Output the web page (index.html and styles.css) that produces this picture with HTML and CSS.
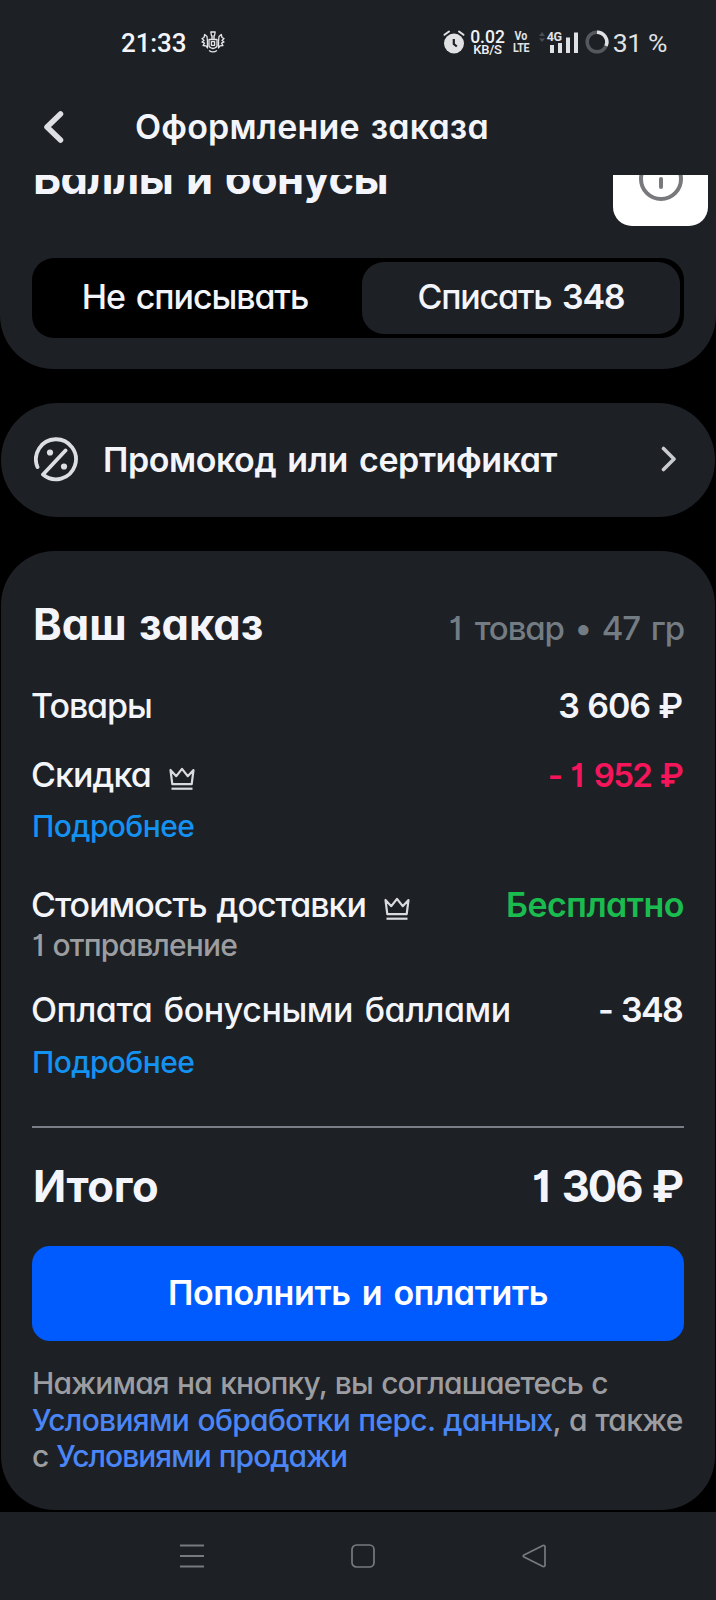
FILE: index.html
```html
<!DOCTYPE html>
<html lang="ru">
<head>
<meta charset="utf-8">
<title>Оформление заказа</title>
<link rel="stylesheet" href="styles.css">
</head>
<body>
<div class="status-bar">
  <div class="status-left">
    <span class="clock">21:33</span>
    <svg class="crest" width="24" height="22" viewBox="0 0 24 22" fill="none" stroke="#e3e5e7" stroke-width="1.3" stroke-linejoin="round"><path d="M9.800 1h4.400l-.8 4.200h-2.800zM10 6.800h4M8 8.500h8v6c0 1.500-2 2.500-4 3-2-.5-4-1.500-4-3zM10.400 10.600h3.200v3.700h-3.200zM6.400 9.500 6 5.500 3.700 3.500 3 6.500 1 7.500l2 2-2 1.500 2.500 1.200L2 14.500l3 .3L6.500 17zM17.600 9.500l.4-4 2.300-2 .7 3 2 1-2 2 2 1.500-2.500 1.200 1.500 2.300-3 .3-1.500 2.200zM8 19.500c2.500 1.800 5.500 1.800 8 0"/></svg>
  </div>
  <div class="status-right">
    <svg class="alarm" width="22" height="24" viewBox="0 0 22 24"><circle cx="11" cy="13.500" r="10" fill="#dfe1e3"/><path d="M1.500 4.800 6 1.500M20.500 4.800 16 1.500" stroke="#dfe1e3" stroke-width="2" stroke-linecap="round"/><path d="M10.800 9v5l3 2.500" fill="none" stroke="#1d2025" stroke-width="2.200"/></svg>
    <div class="speed"><span class="speed-value">0.02</span><span class="speed-unit">KB/S</span></div>
    <div class="volte"><span>Vo</span><span class="lte">LTE</span></div>
    <div class="signal">
      <svg width="40" height="24" viewBox="0 0 40 24"><path d="m1 6 3-4 3 4zM1 8.500l3 3.500 3-3.500z" fill="#4a4d51"/><path d="M12 15h4v8h-4zM20 13h4v10h-4zM28 7.500h4V23h-4zM36 2.500h4V23h-4z" fill="#dfe1e3"/></svg>
      <span class="network">4G</span>
    </div>
    <svg class="battery" width="24" height="24" viewBox="0 0 24 24" fill="none" stroke-width="3.500"><circle cx="12" cy="12" r="9.800" stroke="#55585c"/><path d="M12 2.200a9.800 9.800 0 0 1 9 13.700" stroke="#dfe1e3"/></svg>
    <span class="percent">31 %</span>
  </div>
</div>
<header class="header">
  <svg class="back" width="22" height="34" viewBox="0 0 22 34" fill="none" stroke="#dddfe2" stroke-width="5.500" stroke-linecap="round" stroke-linejoin="round"><path d="M18.500 4 5 17l13.500 13"/></svg>
  <h1 class="page-title">Оформление заказа</h1>
</header>
<main class="content">
  <section class="card bonus">
    <div class="bonus-head">
      <h2 class="heading bonus-title">Баллы и бонусы</h2>
      <div class="info"><svg width="44" height="44" viewBox="0 0 44 44" fill="none" stroke="#77797c" stroke-width="4" stroke-linecap="round"><circle cx="22" cy="22" r="20"/><path d="M22 22v8M22 13v1"/></svg></div>
    </div>
    <div class="segmented">
      <div class="segment"><span class="seg-off">Не списывать</span></div>
      <div class="segment active"><span class="seg-on">Списать <b>348</b></span></div>
    </div>
  </section>
  <section class="card promo">
    <svg class="promo-icon" width="46" height="46" viewBox="0 0 46 46" fill="none" stroke="#dcdee3" stroke-width="3.800" stroke-linecap="round" stroke-linejoin="round"><path d="M3.500 30A20 20 0 1 1 9 37.500L31.500 13.500"/><g fill="#dcdee3" stroke="none"><circle cx="16" cy="15.500" r="3.100"/><circle cx="30" cy="29.500" r="3.100"/></g></svg>
    <span class="promo-text">Промокод или сертификат</span>
    <svg class="chevron" width="16" height="26" viewBox="0 0 16 26" fill="none" stroke="#c9cbcf" stroke-width="3.600" stroke-linecap="round" stroke-linejoin="round"><path d="m2.500 2.500 10.500 10.500-10.500 10.500"/></svg>
  </section>
  <section class="card order">
    <div class="row order-head"><h2 class="heading order-title">Ваш заказ</h2><span class="summary"><span class="one">1</span> товар • 47 гр</span></div>
    <div class="row goods"><span class="goods-label">Товары</span><b class="goods-sum">3 606 ₽</b></div>
    <div class="row discount"><span class="label"><span class="discount-label">Скидка</span><svg class="crown" width="26" height="24" viewBox="0 0 26 24" fill="none" stroke="#d9dbdf" stroke-width="2.200"><path d="m1.500 3 1.800 14.200h19.400L24.500 3l-5.800 6.200L13 1.800 7.300 9.200z" stroke-linejoin="round"/><path d="M2.500 21.700h21"/></svg></span><b class="discount-sum">- <span class="one">1</span> 952 ₽</b></div>
    <a class="more first">Подробнее</a>
    <div class="row delivery"><span class="label"><span class="delivery-label">Стоимость доставки</span><svg class="crown" width="26" height="24" viewBox="0 0 26 24" fill="none" stroke="#d9dbdf" stroke-width="2.200"><path d="m1.500 3 1.800 14.200h19.400L24.500 3l-5.800 6.200L13 1.800 7.300 9.200z" stroke-linejoin="round"/><path d="M2.500 21.700h21"/></svg></span><b class="free">Бесплатно</b></div>
    <div class="note">1 отправление</div>
    <div class="row points"><span class="points-label">Оплата бонусными баллами</span><b class="points-sum">- 348</b></div>
    <a class="more second">Подробнее</a>
    <hr class="divider">
    <div class="row total"><span class="heading total-label">Итого</span><span class="heading total-sum"><span class="one">1</span> 306 ₽</span></div>
    <button class="pay">Пополнить и оплатить</button>
    <p class="legal"><span class="line-1">Нажимая на кнопку, вы соглашаетесь с</span><br><span class="line-2"><a>Условиями обработки перс. данных</a>, а также</span><br><span class="line-3">с <a>Условиями продажи</a></span></p>
  </section>
</main>
<nav class="nav">
  <svg width="24" height="24" viewBox="0 0 24 24" stroke="#777a7e" stroke-width="1.800"><path d="M0 1.500h24M0 12h24M0 22.500h24"/></svg>
  <svg width="24" height="24" viewBox="0 0 24 24" fill="none" stroke="#777a7e" stroke-width="1.700"><rect x="1" y="1" width="22" height="22" rx="4.500"/></svg>
  <svg width="24" height="24" viewBox="0 0 24 24" fill="none" stroke="#777a7e" stroke-width="1.700" stroke-linejoin="round"><path d="M21 1.500 2 11q-1.500 1 0 2l19 9.500q2 .5 2-1.500V3q0-2-2-1.500z"/></svg>
</nav>
</body>
</html>
```
FILE: styles.css
```css
* { box-sizing: border-box; }
body {
  margin: 0;
  width: 716px;
  height: 1600px;
  overflow: hidden;
  background: #000;
  color: #f3f5fb;
  font-family: Inter, "Noto Sans", sans-serif;
  font-size: 34px;
  font-weight: 450;
  font-feature-settings: "cv11", "cv01";
}
h1, h2, p { margin: 0; font-size: inherit; font-weight: inherit; }
svg { display: block; flex: none; }
b { font-weight: 600; }
span, a, b, h1, h2 { white-space: nowrap; }
.one { margin: 0 3px 0 -2px; }

/* System status bar */
.status-bar {
  height: 78px;
  padding: 8px 49px 0 121px;
  display: flex;
  align-items: center;
  justify-content: space-between;
  background: #1d2025;
  font-family: Roboto, sans-serif;
  font-weight: 400;
  font-feature-settings: normal;
}
.status-left, .status-right { display: flex; align-items: center; }
.clock { font-size: 26px; font-weight: 500; letter-spacing: -0.1px; }
.crest { margin: -2px 0 0 15px; }
.status-right { color: #e0e2e4; }
.alarm { margin: -2px 0 0 1px; }
.speed { display: flex; flex-direction: column; align-items: center; margin-left: 5px; font-weight: 500; color: #f0f1f3; }
.speed-value { font-size: 17.5px; line-height: 14px; }
.speed-unit { font-size: 13px; line-height: 12px; letter-spacing: -0.2px; }
.volte { display: flex; flex-direction: column; align-items: center; width: 16px; margin: -2px 0 0 8px; font-size: 13px; font-weight: 700; line-height: 12px; transform: scaleX(0.82); }
.lte { letter-spacing: -0.5px; }
.signal { position: relative; margin: -2px 0 0 9px; }
.network { position: absolute; left: 9px; top: 0; font-size: 12.5px; font-weight: 700; line-height: 13px; letter-spacing: -0.5px; }
.battery { margin: -2px 0 0 7px; }
.percent { margin: -2px 0 0 4px; font-size: 26.5px; letter-spacing: -0.4px; }

/* Page header */
.header { height: 97px; padding-left: 42px; display: flex; align-items: center; background: #1d2025; }
.page-title { margin-left: 71px; font-weight: 600; letter-spacing: 0.2px; word-spacing: 2px; }

/* Scrolled cards */
.content { height: 1337px; overflow: hidden; display: flex; flex-direction: column; gap: 34px; }
.card { background: #1d2025; border-radius: 54px; margin: 0 1px; padding: 0 31px; flex: none; }
.heading { font-size: 43.5px; font-weight: 750; line-height: 50px; }

.bonus { height: 194px; border-radius: 0 0 54px 54px; margin: 0; padding: 0 32px; }
.bonus-head { display: flex; justify-content: space-between; align-items: flex-start; margin: -44px -24px 32px 0; }
.bonus-title { margin: 22px 0 0 1px; letter-spacing: -0.6px; word-spacing: 3px; }
.info { width: 95px; height: 95px; border-radius: 19px; background: #fff; display: grid; place-items: center; }
.segmented { display: grid; grid-template-columns: 1fr 1fr; gap: 8px; height: 80px; padding: 4px; border-radius: 22px; background: #000; }
.segment { display: flex; align-items: center; justify-content: center; padding-bottom: 3px; border-radius: 22px; }
.segment.active { background: #1d2025; }
.seg-off { letter-spacing: -1.1px; word-spacing: 3px; }
.seg-on { letter-spacing: -1.25px; word-spacing: 3px; }

.promo { height: 114px; border-radius: 57px; display: flex; align-items: center; }
.promo-icon { margin-left: 2px; }
.promo-text { margin: -2px 0 0 23px; font-weight: 600; letter-spacing: -0.43px; word-spacing: 3px; }
.chevron { margin: 0 7px 2px auto; }

.order { height: 959px; padding-top: 48px; }
.row { display: flex; justify-content: space-between; align-items: baseline; line-height: 44px; }
.label { display: flex; align-items: center; margin-left: -1px; }
.label .crown { margin: 7px 0 0 18px; }
.order-title { margin-left: 1px; letter-spacing: 0; word-spacing: 2px; }
.summary { font-size: 33px; color: #747c83; letter-spacing: -1.1px; word-spacing: 3px; }
.goods { margin-top: 34px; }
.goods-label { margin-left: -1px; letter-spacing: -1.1px; }
.goods-sum { margin-right: 2px; letter-spacing: -1.1px; word-spacing: 1px; }
.discount { margin-top: 25px; }
.discount-label { letter-spacing: -0.9px; }
.discount-sum { margin-right: 2px; font-size: 33px; color: #f5155a; letter-spacing: -1.7px; word-spacing: 2px; }
.discount-sum .one { margin-left: 0; }
.more { display: block; font-size: 30px; line-height: 36px; letter-spacing: -0.6px; color: #1492f2; }
.more.first { margin-top: 11px; }
.more.second { margin-top: 12px; }
.delivery { margin-top: 39px; }
.delivery-label { letter-spacing: -1px; word-spacing: 2px; }
.free { color: #1abc50; letter-spacing: -0.5px; }
.note { font-size: 30px; line-height: 36px; color: #9c9da0; letter-spacing: -0.85px; word-spacing: 2px; }
.points { margin-top: 25px; }
.points-label { margin-left: -1px; letter-spacing: -0.45px; word-spacing: 3px; }
.points-sum { margin-right: 2px; letter-spacing: -1.7px; word-spacing: 2px; }
.divider { height: 2px; margin: 46px 0 33px; border: 0; background: #7b7d87; }
.total-label { margin-left: 1px; letter-spacing: -0.3px; }
.total-sum { margin-right: 2px; letter-spacing: -2px; word-spacing: 2px; }
.pay {
  display: flex;
  align-items: center;
  justify-content: center;
  width: 100%;
  height: 95px;
  margin: 35px 0 24px;
  padding: 0 0 3px;
  border: 0;
  border-radius: 18px;
  background: #005bff;
  color: #fff;
  font: inherit;
  font-feature-settings: inherit;
  font-weight: 600;
  letter-spacing: -0.37px;
  word-spacing: 3px;
}
.legal { font-size: 30px; line-height: 36.5px; color: #9c9da0; white-space: nowrap; word-spacing: 1px; }
.legal a { color: #4a86f5; }
.line-1 { letter-spacing: -0.83px; }
.line-2 { letter-spacing: -0.69px; }
.line-3 { letter-spacing: -1px; }

/* System navigation */
.nav { height: 88px; padding-left: 180px; display: flex; align-items: center; gap: 147px; background: #1d2025; }
```
